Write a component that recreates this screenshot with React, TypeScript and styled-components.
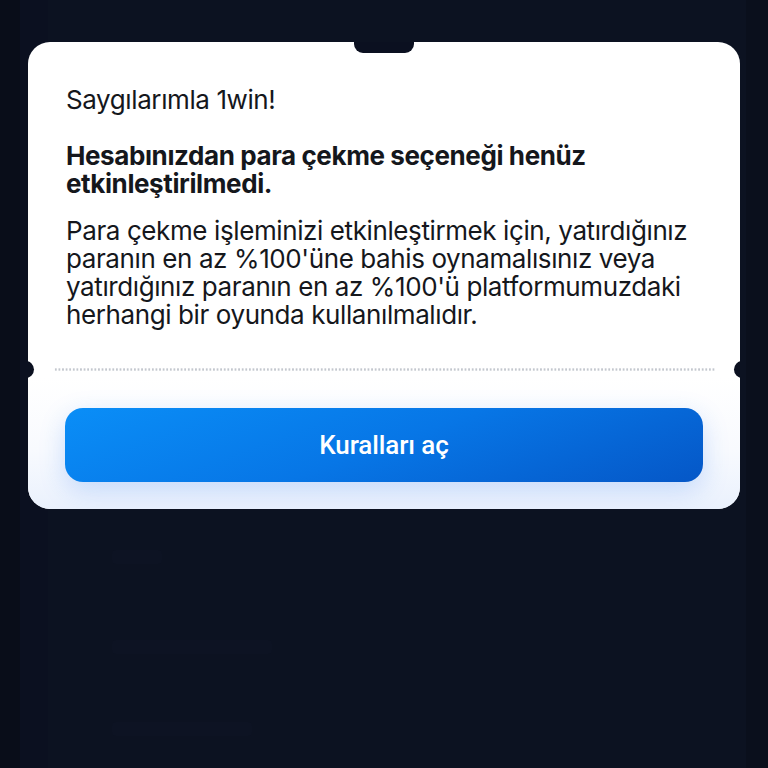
import styled, { createGlobalStyle } from "styled-components";

const GlobalStyle = createGlobalStyle`
  html, body {
    margin: 0;
    padding: 0;
    background: #0b1020;
  }
  * {
    box-sizing: border-box;
  }
`;

const App = () => {
  return (
    <>
      <GlobalStyle />
      <Page>
        <Backdrop>
          <GhostLine $top={550} $w={50} />
          <GhostLine $top={640} $w={160} />
          <GhostLine $top={722} $w={140} />
        </Backdrop>
        <Card>
          <Notch />
          <Body>
            <Greeting>Saygılarımla 1win!</Greeting>
            <Title>
              Hesabınızdan para çekme seçeneği henüz
              <br />
              etkinleştirilmedi.
            </Title>
            <Text>
              Para çekme işleminizi etkinleştirmek için, yatırdığınız
              <br />
              paranın en az %100'üne bahis oynamalısınız veya
              <br />
              yatırdığınız paranın en az %100'ü platformumuzdaki
              <br />
              herhangi bir oyunda kullanılmalıdır.
            </Text>
          </Body>
          <Divider>
            <Dots />
          </Divider>
          <Footer>
            <RulesBtn>Kuralları aç</RulesBtn>
          </Footer>
        </Card>
      </Page>
    </>
  );
};

const Page = styled.div`
  position: relative;
  width: 768px;
  height: 768px;
  overflow: hidden;
  padding-top: 42px;
  background: linear-gradient(
    90deg,
    #090d19 0px,
    #090d19 20px,
    #0b1020 20px,
    #0b1020 48px,
    #0c1221 48px,
    #0c1221 746px,
    #0a0f1c 746px
  );
  font-family: Inter, "Noto Sans", "Liberation Sans", sans-serif;
`;

const Backdrop = styled.div`
  position: absolute;
  left: 48px;
  right: 22px;
  top: 0;
  bottom: 0;
`;

const GhostLine = styled.div<{ $top: number; $w: number }>`
  position: absolute;
  left: 64px;
  top: ${(p) => p.$top}px;
  width: ${(p) => p.$w}px;
  height: 14px;
  border-radius: 4px;
  background: #0d1323;
`;

const Card = styled.div`
  position: relative;
  margin: 0 28px;
  background: #ffffff;
  border-radius: 22px;
  height: 467px;
  display: flex;
  flex-direction: column;
  overflow: hidden;
`;

const Notch = styled.div`
  position: absolute;
  top: 0;
  left: 50%;
  transform: translateX(-50%);
  width: 60px;
  height: 11px;
  background: #0b1020;
  border-radius: 0 0 9px 9px;
`;

const Body = styled.div`
  padding: 44px 20px 0 38px;
  color: #15171c;
  font-size: 26px;
  line-height: 28px;
  letter-spacing: -0.4px;
  white-space: nowrap;
`;

const Greeting = styled.p`
  margin: 0 0 28px 0;
  font-weight: 400;
`;

const Title = styled.h2`
  margin: 0 0 19px 0;
  font-size: inherit;
  line-height: inherit;
  font-weight: 700;
`;

const Text = styled.p`
  margin: 0;
  font-weight: 400;
`;

const Divider = styled.div`
  position: relative;
  margin-top: 32px;
  height: 17px;
  display: flex;
  align-items: center;
  padding: 0 24px 0 26px;
  &::before,
  &::after {
    content: "";
    position: absolute;
    top: 0;
    width: 17px;
    height: 17px;
    border-radius: 50%;
    background: #0b1020;
  }
  &::before {
    left: -11px;
  }
  &::after {
    right: -11px;
  }
`;

const Dots = styled.div`
  flex: 1;
  height: 3px;
  background-image: radial-gradient(circle, #c3c7ce 1px, transparent 1.3px);
  background-size: 3.6px 3px;
  background-repeat: repeat-x;
`;

const Footer = styled.div`
  flex: 1;
  padding: 30px 37px 0 37px;
  background: linear-gradient(180deg, #ffffff 0%, #f8fafe 55%, #eaf1fd 100%);
`;

const RulesBtn = styled.button`
  width: 100%;
  height: 74px;
  border: none;
  border-radius: 18px;
  background: linear-gradient(160deg, #0a8ef7 0%, #0776e6 50%, #0557c7 100%);
  box-shadow: 0 8px 26px rgba(40, 120, 240, 0.22);
  color: #ffffff;
  font-family: Roboto, "Liberation Sans", sans-serif;
  font-size: 26px;
  font-weight: 500;
  letter-spacing: -0.1px;
  cursor: pointer;
`;

export default App;
